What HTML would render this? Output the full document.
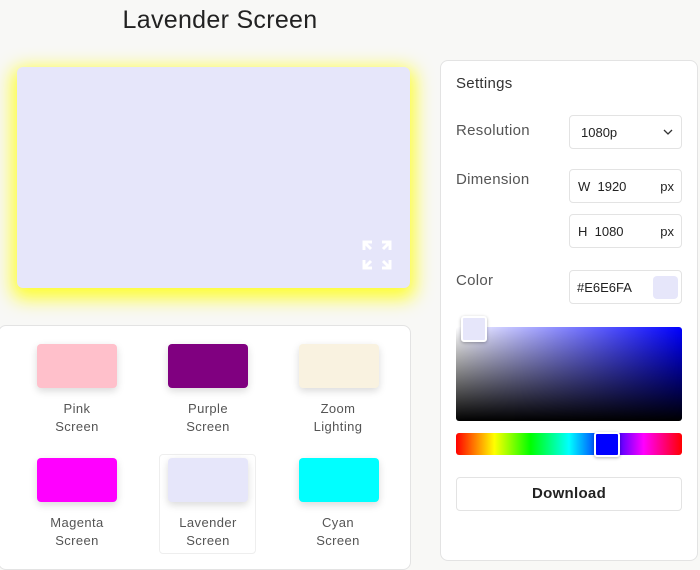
<!DOCTYPE html>
<html><head><style>
*{box-sizing:border-box;margin:0;padding:0}
body{width:700px;height:564px;background:#f8f8f6;font-family:"Liberation Sans",sans-serif;position:relative;overflow:hidden;color:#333}
.abs{position:absolute}
h1{position:absolute;left:0;width:440px;top:6px;text-align:center;font-weight:400;font-size:25px;color:#222;letter-spacing:.3px}
.preview{left:17px;top:67px;width:393px;height:221px;background:#e6e6fa;border-radius:6px;box-shadow:0 6px 18px 5px rgba(255,255,0,.8)}
.gal{left:-2px;top:325px;width:413px;height:245px;background:#fff;border:1px solid #e3e3e3;border-radius:8px}
.sw{position:absolute;width:80px;height:44px;border-radius:4px;box-shadow:0 3px 8px rgba(0,0,0,.15)}
.lb{position:absolute;width:120px;text-align:center;font-size:13px;line-height:18px;color:#555;letter-spacing:.4px}
.set{left:440px;top:60px;width:258px;height:501px;background:#fff;border:1px solid #e3e3e3;border-radius:8px}
.lab{position:absolute;left:456px;font-size:15px;color:#555;letter-spacing:.3px}
.box{position:absolute;left:569px;width:113px;height:34px;border:1px solid #e3e3e3;border-radius:4px;background:#fff;font-size:13px;color:#222}
</style></head><body>
<h1>Lavender Screen</h1>
<div class="abs preview"></div>
<svg class="abs" style="left:362px;top:240px" width="30" height="30" viewBox="0 0 30 30" fill="none" stroke="#fff" stroke-width="3"><path d="M2 10V2h8M2 2l7 7M28 10V2h-8M28 2l-7 7M2 20v8h8M2 28l7-7M28 20v8h-8M28 28l-7-7"/></svg>
<div class="abs gal"></div>
<div class="abs" style="left:159px;top:454px;width:97px;height:100px;border:1px solid #eee;border-radius:4px"></div>
<div class="sw" style="left:37px;top:344px;background:#ffc0cb"></div>
<div class="sw" style="left:168px;top:344px;background:#800080"></div>
<div class="sw" style="left:299px;top:344px;background:#f9f2e0"></div>
<div class="sw" style="left:37px;top:458px;background:#ff00ff"></div>
<div class="sw" style="left:168px;top:458px;background:#e6e6fa"></div>
<div class="sw" style="left:299px;top:458px;background:#00ffff"></div>
<div class="lb" style="left:17px;top:400px">Pink<br>Screen</div>
<div class="lb" style="left:148px;top:400px">Purple<br>Screen</div>
<div class="lb" style="left:278px;top:400px">Zoom<br>Lighting</div>
<div class="lb" style="left:17px;top:514px">Magenta<br>Screen</div>
<div class="lb" style="left:148px;top:514px">Lavender<br>Screen</div>
<div class="lb" style="left:278px;top:514px">Cyan<br>Screen</div>
<div class="abs set"></div>
<div class="abs" style="left:456px;top:75px;font-size:15px;color:#333;letter-spacing:.3px">Settings</div>
<div class="lab" style="top:122px">Resolution</div>
<div class="lab" style="top:171px">Dimension</div>
<div class="lab" style="top:272px">Color</div>
<div class="box" style="top:115px;padding:9px 0 0 11px">1080p<svg style="position:absolute;right:8px;top:13px" width="10" height="6" viewBox="0 0 10 6" fill="none" stroke="#333" stroke-width="1.3"><path d="M1 1l4 4 4-4"/></svg></div>
<div class="box" style="top:169px;padding:9px 0 0 8px">W&nbsp; 1920<span style="position:absolute;right:7px;top:9px">px</span></div>
<div class="box" style="top:214px;padding:9px 0 0 8px">H&nbsp; 1080<span style="position:absolute;right:7px;top:9px">px</span></div>
<div class="box" style="top:270px;padding:9px 0 0 7px">#E6E6FA<span style="position:absolute;right:3px;top:5px;width:25px;height:23px;background:#e6e6fa;border-radius:4px"></span></div>
<div class="abs" style="left:456px;top:327px;width:226px;height:94px;border-radius:3px;background:linear-gradient(to top,#000,rgba(0,0,0,0)),linear-gradient(to right,#fff,#00f)"></div>
<div class="abs" style="left:461px;top:316px;width:26px;height:26px;background:#e6e6fa;border:2px solid #fff;border-radius:3px;box-shadow:0 1px 3px rgba(0,0,0,.3)"></div>
<div class="abs" style="left:456px;top:433px;width:226px;height:22px;border-radius:3px;background:linear-gradient(to right,#f00,#ff0 17%,#0f0 33%,#0ff 50%,#00f 67%,#f0f 83%,#f00)"></div>
<div class="abs" style="left:594px;top:432px;width:26px;height:25px;background:#00f;border:2px solid #fff;border-radius:3px;box-shadow:0 1px 3px rgba(0,0,0,.3)"></div>
<div class="abs" style="left:456px;top:477px;width:226px;height:34px;border:1px solid #e3e3e3;border-radius:4px;text-align:center;line-height:32px;font-size:15px;color:#222;font-weight:bold;letter-spacing:.3px">Download</div>
</body></html>
